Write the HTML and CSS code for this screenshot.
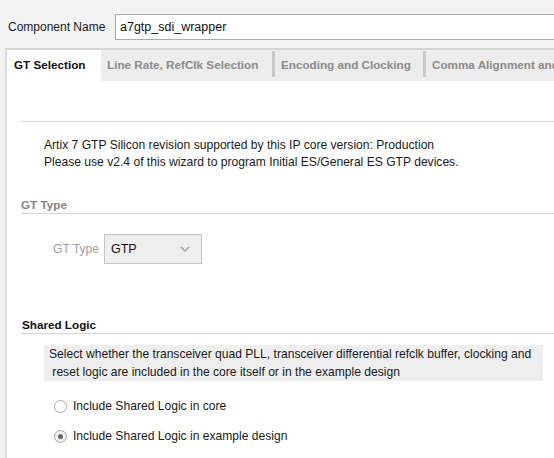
FILE: index.html
```html
<!DOCTYPE html>
<html>
<head>
<meta charset="utf-8">
<link rel="stylesheet" href="styles.css">
</head>
<body>
<div class="page">
  <div class="top">
    <span class="top-label">Component Name</span>
    <div class="name-input">a7gtp_sdi_wrapper</div>
  </div>
  <div class="panel">
    <div class="tabs">
      <div class="tab active">GT Selection</div>
      <div class="tab t2">Line Rate, RefClk Selection</div>
      <div class="sep"></div>
      <div class="tab t3">Encoding and Clocking</div>
      <div class="sep"></div>
      <div class="tab t4">Comma Alignment and Equalization</div>
    </div>
    <div class="content">
      <div class="info">
        <p>Artix 7 GTP Silicon revision supported by this IP core version: Production</p>
        <p>Please use v2.4 of this wizard to program Initial ES/General ES GTP devices.</p>
      </div>
      <div class="section-head muted">GT Type</div>
      <div class="field-row">
        <span class="field-label">GT Type</span>
        <div class="select">
          <span>GTP</span>
          <svg class="chev" width="10" height="6" viewBox="0 0 10 6"><polyline points="1,1 5,5 9,1" fill="none" stroke="#a8a8a8" stroke-width="1.6"/></svg>
        </div>
      </div>
      <div class="section-head strong">Shared Logic</div>
      <div class="desc">Select whether the transceiver quad PLL, transceiver differential refclk buffer, clocking and<br>&nbsp;reset logic are included in the core itself or in the example design</div>
      <div class="radios">
        <div class="radio-row"><span class="radio"></span><span>Include Shared Logic in core</span></div>
        <div class="radio-row"><span class="radio on"></span><span>Include Shared Logic in example design</span></div>
      </div>
    </div>
  </div>
</div>
</body>
</html>
```
FILE: styles.css
```css
html, body {
  margin: 0;
  padding: 0;
}
body {
  width: 554px;
  height: 458px;
  overflow: hidden;
  background: #f3f3f3;
  font-family: "Liberation Sans", Arial, sans-serif;
  font-size: 12.1px;
  color: #1a1a1a;
}
.page {
  width: 760px;
}
.top {
  display: flex;
  align-items: center;
  height: 48px;
  padding-left: 8px;
  padding-top: 5px;
  box-sizing: border-box;
}
.top-label {
  width: 107px;
  font-size: 12px;
  color: #1a1a1a;
}
.name-input {
  flex: 1;
  height: 26px;
  box-sizing: border-box;
  border: 1px solid #acacac;
  background: #fff;
  padding-left: 4px;
  line-height: 24px;
  font-size: 12.5px;
  color: #111;
}
.panel {
  margin-left: 5px;
  border-left: 2px solid #dcdcdc;
  border-top: 2px solid #d6d6d6;
  background: #fff;
  height: 420px;
}
.tabs {
  display: flex;
  align-items: center;
  height: 31px;
  background: #ececec;
}
.tab {
  height: 31px;
  line-height: 30px;
  font-weight: bold;
  font-size: 11.7px;
  color: #8c8c8c;
  white-space: nowrap;
  box-sizing: border-box;
}
.tab.active {
  background: #fff;
  color: #111;
  width: 94px;
  padding-left: 7px;
}
.t2 {
  width: 171px;
  padding-left: 6px;
}
.t3 {
  width: 148px;
  padding-left: 6px;
}
.t4 {
  padding-left: 6px;
}
.sep {
  width: 3px;
  height: 26px;
  background: #c8c8c8;
  align-self: flex-start;
  margin-top: 1px;
}
.content {
  padding-left: 14px;
  padding-top: 40px;
}
.info {
  border-top: 1px solid #d4d4d4;
  padding: 9px 0 0 23px;
}
.info p {
  margin: 0;
  line-height: 17px;
}
.info p:first-child {
  margin-top: 6px;
}
.section-head {
  border-bottom: 1px solid #d4d4d4;
  font-weight: bold;
  font-size: 11.7px;
  line-height: 17px;
}
.section-head.muted {
  margin-top: 25px;
  color: #858585;
}
.section-head.strong {
  margin-top: 52px;
  color: #111;
  padding-left: 1px;
}
.field-row {
  display: flex;
  align-items: center;
  margin-top: 20px;
  padding-left: 32px;
}
.field-label {
  color: #a0a0a0;
  width: 51px;
}
.select {
  display: flex;
  align-items: center;
  justify-content: space-between;
  width: 98px;
  height: 30px;
  box-sizing: border-box;
  border: 1px solid #c4c4c4;
  background: #eeeeee;
  padding: 0 11px 0 6px;
  color: #111;
  font-size: 12.5px;
}
.chev {
  display: block;
}
.desc {
  margin: 11px 0 0 23px;
  width: 499px;
  background: #eeeeee;
  padding: 0 0 0 5px;
  box-sizing: border-box;
  line-height: 18px;
  white-space: nowrap;
}
.radios {
  margin-top: 16px;
  padding-left: 33px;
  display: flex;
  flex-direction: column;
  gap: 12px;
}
.radio-row {
  display: flex;
  align-items: center;
  gap: 6px;
  height: 18px;
}
.radio {
  width: 13px;
  height: 13px;
  box-sizing: border-box;
  border: 1px solid #a9a9a9;
  border-radius: 50%;
  background: #fdfdfd;
  display: flex;
  align-items: center;
  justify-content: center;
}
.radio.on {
  background: #f0f0f0;
}
.radio.on::after {
  content: "";
  width: 5px;
  height: 5px;
  border-radius: 50%;
  background: #666;
}
```
